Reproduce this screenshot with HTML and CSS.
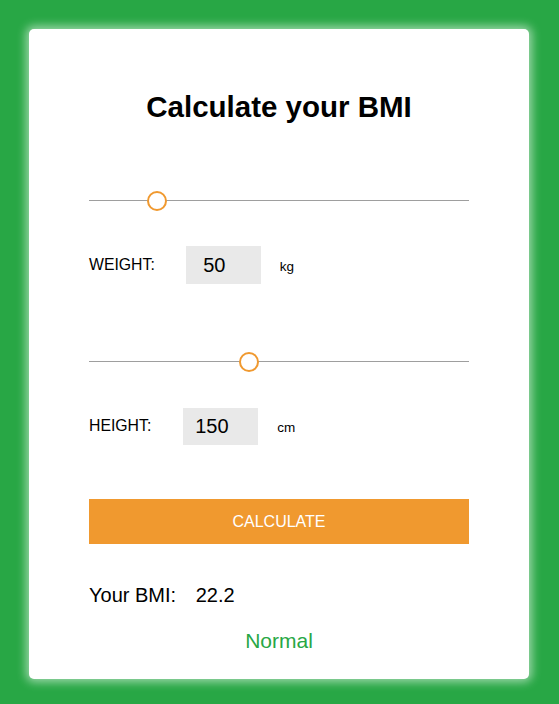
FILE: index.html
```html
<!DOCTYPE html>
<html lang="en">
<head>
<meta charset="utf-8">
<title>BMI Calculator</title>
<link rel="stylesheet" href="styles.css">
</head>
<body>
  <div class="card">
    <h1 class="title">Calculate your BMI</h1>

    <div class="slider">
      <div class="track"></div>
      <div class="thumb" style="left: 58px;"></div>
    </div>
    <div class="field weight">
      <span class="label">WEIGHT:</span>
      <span class="box">50</span>
      <span class="unit">kg</span>
    </div>

    <div class="slider second">
      <div class="track"></div>
      <div class="thumb" style="left: 150px;"></div>
    </div>
    <div class="field height">
      <span class="label">HEIGHT:</span>
      <span class="box">150</span>
      <span class="unit">cm</span>
    </div>

    <button class="calc">CALCULATE</button>

    <div class="result">
      <span class="result-label">Your BMI:</span>
      <span class="result-value">22.2</span>
    </div>
    <div class="status">Normal</div>
  </div>
</body>
</html>
```
FILE: styles.css
```css
* { box-sizing: border-box; }

html, body {
  margin: 0;
  height: 100%;
}

body {
  background: #28a745;
  padding: 29px 30px 25px 29px;
  font-family: "Liberation Sans", Arial, sans-serif;
  color: #000;
}

.card {
  width: 500px;
  height: 650px;
  background: #fff;
  border-radius: 5px;
  box-shadow: 0 0 10px 3px rgba(255, 255, 255, 0.55);
  padding: 0 60px;
  display: flow-root;
}

.title {
  margin: 62px 0 0;
  font-size: 29.5px;
  line-height: 32px;
  font-weight: bold;
  text-align: center;
}

.slider {
  position: relative;
  height: 20px;
  margin-top: 67px;
}

.slider.second {
  margin-top: 67px;
}

.track {
  position: absolute;
  left: 0;
  right: 0;
  top: 10px;
  height: 1px;
  background: #9e9e9e;
}

.thumb {
  position: absolute;
  top: 1px;
  width: 20px;
  height: 20px;
  border: 2px solid #f0992f;
  border-radius: 50%;
  background: #fff;
}

.field {
  display: flex;
  align-items: center;
  height: 38px;
  margin-top: 36px;
}

.label {
  font-size: 15.8px;
  margin-right: 31px;
}

.height .label {
  margin-right: 32px;
}

.box {
  width: 75px;
  height: 38px;
  background: #e9e9e9;
  font-size: 20px;
  line-height: 38px;
  text-align: center;
  padding-right: 18px;
}

.height .box {
  height: 37px;
  line-height: 36px;
}

.unit {
  font-size: 13.5px;
  margin-left: 19px;
  padding-top: 3px;
}

.calc {
  display: block;
  width: 100%;
  height: 45px;
  margin-top: 54px;
  border: none;
  background: #f0992f;
  color: #fff;
  font-family: "Liberation Sans", Arial, sans-serif;
  font-size: 16px;
  padding: 0;
}

.result {
  margin-top: 39px;
  font-size: 20px;
  line-height: 24px;
}

.result-value {
  margin-left: 14px;
}

.status {
  margin-top: 22px;
  text-align: center;
  font-size: 21px;
  line-height: 24px;
  color: #28a745;
}
```
